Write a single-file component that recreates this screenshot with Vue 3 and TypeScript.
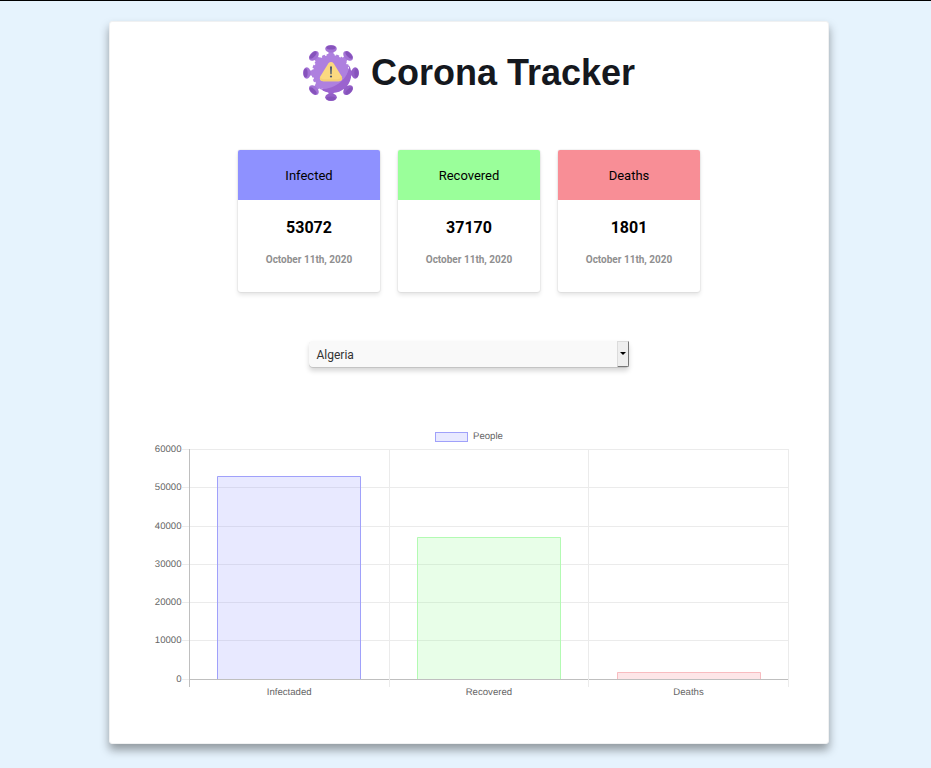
<script setup lang="ts">
interface Stat {
  key: string
  title: string
  axisTitle: string
  value: number
}

const stats: Stat[] = [
  { key: 'infected', title: 'Infected', axisTitle: 'Infectaded', value: 53072 },
  { key: 'recovered', title: 'Recovered', axisTitle: 'Recovered', value: 37170 },
  { key: 'deaths', title: 'Deaths', axisTitle: 'Deaths', value: 1801 },
]
const date = 'October 11th, 2020'
const country = 'Algeria'

// Plot area inside the 660 x 280 chart
const left = 50
const right = 649
const top = 28
const bottom = 258
const max = 60000
const slot = (right - left) / stats.length
const tickStep = 38.31

const yOf = (v: number) => bottom - (v / max) * (bottom - top)
const crisp = (n: number) => Math.floor(n) + 0.5

const ticks = [60000, 50000, 40000, 30000, 20000, 10000, 0].map((value, i) => ({
  value,
  y: crisp(top + 0.4 + i * tickStep),
}))
const columns = [1, 2, 3].map((i) => crisp(left + slot * i + (i === 1 ? 0.4 : 0.1)))
const bars = stats.map((s, i) => {
  const x = 78 + i * 200
  const y = Math.round(yOf(s.value)) + 0.5
  return {
    ...s,
    x,
    y,
    mid: left + slot * (i + 0.5) + 0.4,
    outline: `M${x + 0.5} ${bottom}V${y}H${x + 143.5}V${bottom}`,
  }
})

const arms = [0, 45, 90, 135, 180, 225, 270, 315]
</script>

<template>
  <div class="page">
    <main class="panel">
      <header class="brand">
        <svg class="logo" viewBox="0 0 56 56" aria-hidden="true">
          <g v-for="a in arms" :key="a" :transform="`rotate(${a} 28 28)`">
            <path d="M23.8 12Q26.2 9 25.5 4h5q-.7 5 1.7 8z" :fill="a > 45 && a < 225 ? '#9b63cf' : '#ae80df'" />
            <ellipse cx="28" cy="3.8" rx="5.8" ry="3.8" :fill="a > 45 && a < 225 ? '#945fc8' : '#a473d6'" />
            <ellipse cx="28" cy="2.6" rx="4.6" ry="2" fill="#8653bb" />
          </g>
          <circle cx="28" cy="28" r="18" fill="#ae80df" />
          <circle cx="28" cy="28" r="18.2" fill="none" stroke="#ae80df" stroke-width="2.2" stroke-dasharray="3 1.76" />
          <path d="M46.3 20.5C45.4 33.5 33 44 18 44.3A19 19 0 0 0 46.3 20.5z" fill="#9b63cf" />
          <path d="M25.3 18.4q2.7-2.9 5.4 0l8.2 13.4q1.2 4.2-2.9 4.4H20q-4.1-.2-2.9-4.4z" fill="#fbd980" />
          <path d="M17.6 31.8q-1.4 4.2 2.4 4.4h16q4.1-.2 2.9-4.4l-.6-1q-.8 3.6-4.2 3.5H21q-3 0-3.4-2.5z" fill="#f4cf76" />
          <path d="M27 21.4h2l-.4 7.8h-1.2z" fill="#46566e" />
          <circle cx="28" cy="31.5" r="1.1" fill="#46566e" />
        </svg>
        <h1>Corona Tracker</h1>
      </header>

      <section class="cards">
        <article v-for="s in stats" :key="s.key" class="card">
          <div class="card-head" :class="s.key">{{ s.title }}</div>
          <div class="count">{{ s.value }}</div>
          <div class="date">{{ date }}</div>
        </article>
      </section>

      <div class="picker" role="combobox" aria-expanded="false" tabindex="0">
        <span class="picked">{{ country }}</span>
        <span class="drop"><i class="caret"></i></span>
      </div>

      <svg class="chart" width="660" height="280" viewBox="0 0 660 280">
        <rect class="infected" x="296.5" y="11.5" width="32" height="9" />
        <text x="334" y="18">People</text>

        <g v-for="t in ticks" :key="t.value">
          <path class="grid" :class="{ axis: t.value === 0 }" :d="`M${left} ${t.y}H${right + 1}`" />
          <path class="grid" :d="`M43 ${t.y}H${left}`" />
          <text x="42.5" :y="t.y + 2" text-anchor="end">{{ t.value }}</text>
        </g>
        <path class="grid axis" :d="`M50.5 ${top}V266`" />
        <path v-for="x in columns" :key="x" class="grid" :d="`M${x} ${top}V266`" />

        <g v-for="b in bars" :key="b.key" :class="b.key">
          <rect class="fill" :x="b.x" :y="b.y - 0.5" width="144" :height="bottom - b.y + 0.5" />
          <path class="outline" :d="b.outline" />
        </g>
        <text v-for="b in bars" :key="b.key" :x="b.mid" y="274" text-anchor="middle">{{ b.axisTitle }}</text>
      </svg>
    </main>
  </div>
</template>

<style>
body {
  margin: 0;
  background: #e6f3fd;
}
</style>

<style scoped>
.page {
  box-sizing: border-box;
  height: 768px;
  padding: 20px 102px 0 109px;
  border-top: 1px solid #000;
  background: #e6f3fd;
  font-family: Roboto, sans-serif;
  overflow: hidden;
}
.panel {
  box-sizing: border-box;
  display: flex;
  flex-direction: column;
  align-items: center;
  height: 723px;
  border: 1px solid #f0f1f2;
  border-radius: 3px;
  background: #fff;
  box-shadow: 0 6px 10px rgba(0, 0, 0, 0.37);
}
.brand {
  display: flex;
  align-items: center;
  gap: 12px;
  height: 56px;
  margin-top: 23px;
}
.logo {
  width: 56px;
  height: 56px;
}
h1 {
  margin: 0;
  color: #15181e;
  font: bold 36px/54px 'Liberation Sans', Arial, sans-serif;
}
.cards {
  display: flex;
  gap: 18px;
  margin-top: 49px;
}
.card {
  width: 142px;
  height: 142px;
  border-radius: 3px;
  background: #fff;
  box-shadow: 0 3px 4px rgba(0, 0, 0, 0.1), 0 0 1px 1px rgba(0, 0, 0, 0.05);
  text-align: center;
}
.card-head {
  height: 50px;
  border-radius: 2px 2px 0 0;
  color: #000;
  font-size: 13px;
  line-height: 51px;
}
.card-head.infected {
  background: #8e91ff;
}
.card-head.recovered {
  background: #9aff9a;
}
.card-head.deaths {
  background: #f88e96;
}
.count {
  margin-top: 18px;
  color: #000;
  font-size: 16px;
  font-weight: 700;
  line-height: 20px;
}
.date {
  margin-top: 14px;
  color: #8f8f8f;
  font-size: 10px;
  font-weight: 700;
  line-height: 16px;
}
.picker {
  display: flex;
  width: 320px;
  height: 27px;
  margin-top: 49px;
  border-radius: 4px;
  background: #f9f9f9;
  box-shadow: inset 0 -1px 0 #c4c4c4, 0 3px 5px rgba(0, 0, 0, 0.16);
}
.picked {
  flex: 1;
  padding-left: 7.5px;
  color: #333;
  font-size: 12px;
  line-height: 28px;
}
.drop {
  box-sizing: border-box;
  display: flex;
  align-items: center;
  justify-content: center;
  width: 12px;
  height: 26px;
  border: 1px solid #dcdcdc;
  border-right-color: #777;
  border-bottom-color: #777;
  border-radius: 0 1px 2px 0;
  background: #efefef;
}
.caret {
  border: 3px solid transparent;
  border-top-color: #000;
  border-bottom: 0;
  margin-top: -1px;
}
.chart {
  margin-top: 53px;
  font-family: 'Liberation Sans', Arial, sans-serif;
  font-size: 9.6px;
  text-rendering: geometricPrecision;
}
.chart text {
  fill: #666;
}
.grid {
  fill: none;
  stroke: #ebebeb;
}
.grid.axis {
  stroke: #bfbfbf;
}
.chart .infected {
  fill: rgba(142, 145, 255, 0.2);
  stroke: #a0a1fa;
}
.chart .recovered {
  fill: rgba(142, 250, 142, 0.2);
  stroke: #b3fab3;
}
.chart .deaths {
  fill: rgba(248, 142, 150, 0.22);
  stroke: #f8bcc0;
}
.chart .fill {
  stroke: none;
}
.chart .outline {
  fill: none;
}
</style>
